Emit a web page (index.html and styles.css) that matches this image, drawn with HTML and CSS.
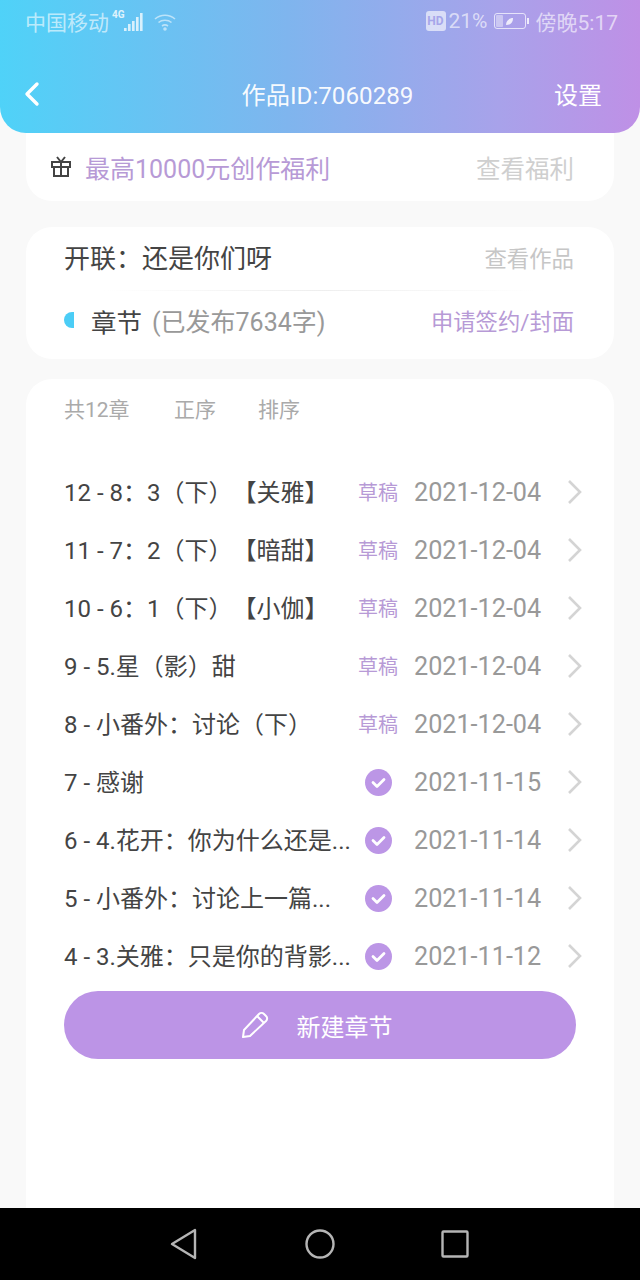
FILE: index.html
```html
<!DOCTYPE html>
<html lang="zh">
<head>
    <meta charset="UTF-8">
    <meta name="viewport" content="width=device-width, initial-scale=1.0">
    <title>作品设置</title>
    <link rel="stylesheet" href="styles.css">
</head>
<body>
    <div class="screen">
        <div class="header">
            <div class="status-bar">
                <div class="status-side">
                    <span>中国移动</span>
                    <svg class="signal" width="36" height="24" viewBox="0 0 36 24">
                        <text x="0" y="9" class="signal-type">4G</text>
                        <g fill="#fff" opacity="0.75">
                            <rect x="12" y="19" width="2.6" height="3"/>
                            <rect x="16" y="15" width="2.6" height="7"/>
                            <rect x="20" y="12" width="2.6" height="10"/>
                            <rect x="24" y="8" width="2.6" height="14"/>
                            <rect x="28" y="4" width="2.6" height="18"/>
                        </g>
                    </svg>
                    <svg class="wifi" width="24" height="20" viewBox="0 0 24 20" fill="none" stroke="#fff" stroke-width="1.6" opacity="0.55">
                        <path d="M2 8c5.5-5 14.5-5 20 0"/>
                        <path d="M5.5 11.5c3.5-3 9.500-3 13 0"/>
                        <path d="M9 15c1.800-1.300 4.200-1.300 6 0"/>
                        <circle cx="12" cy="18" r="1" fill="#fff"/>
                    </svg>
                </div>
                <div class="status-side">
                    <span class="hd">HD</span>
                    <span class="percent">21%</span>
                    <svg class="battery" width="36" height="18" viewBox="0 0 36 18">
                        <rect x="0.5" y="1.5" width="31" height="15" rx="2.5" fill="none" stroke="#fff" stroke-opacity="0.7"/>
                        <rect x="2" y="3" width="7" height="12" rx="1" fill="#fff" fill-opacity="0.4"/>
                        <path d="M12 13c0-5 4-7 7-7 0 4-2 7-7 7z" fill="#fff" fill-opacity="0.8"/>
                        <rect x="33" y="6" width="2" height="6" fill="#fff" fill-opacity="0.8"/>
                    </svg>
                    <span>傍晚5:17</span>
                </div>
            </div>
            <div class="nav-bar">
                <svg class="back" width="18" height="26" viewBox="0 0 18 26" fill="none" stroke="#fff" stroke-width="3.4" stroke-linecap="round" stroke-linejoin="round">
                    <path d="M14 3L4 13l10 10"/>
                </svg>
                <div class="nav-title">作品ID:7060289</div>
                <div class="nav-action">设置</div>
            </div>
        </div>

        <div class="card welfare">
            <svg class="gift" width="22" height="22" viewBox="0 0 22 22" fill="none" stroke="#444" stroke-width="2">
                <rect x="2" y="6" width="18" height="5"/>
                <path d="M4 11v9h14v-9M11 6v14M7 1l4 5 4-5"/>
            </svg>
            <span class="welfare-text">最高10000元创作福利</span>
            <span class="welfare-link">查看福利</span>
        </div>

        <div class="card work">
            <div class="work-row">
                <span class="work-name">开联：还是你们呀</span>
                <span class="work-link">查看作品</span>
            </div>
            <div class="divider"></div>
            <div class="chapter-row">
                <span class="half-dot"></span>
                <span class="chapter-label">章节</span>
                <span class="chapter-count">(已发布7634字)</span>
                <span class="chapter-link">申请签约/封面</span>
            </div>
        </div>

        <div class="card list-card">
            <div class="tabs">
                <span class="tab-total">共12章</span>
                <span class="tab-order">正序</span>
                <span>排序</span>
            </div>
            <div class="chapter-list">
                <div class="item">
                    <span class="item-title">12 - 8：3（下）【关雅】</span>
                    <span class="draft">草稿</span>
                    <span class="date">2021-12-04</span>
                    <svg class="arrow" width="16" height="26" viewBox="0 0 16 26"><path d="M2 2l11 11L2 24"/></svg>
                </div>
                <div class="item">
                    <span class="item-title">11 - 7：2（下）【暗甜】</span>
                    <span class="draft">草稿</span>
                    <span class="date">2021-12-04</span>
                    <svg class="arrow" width="16" height="26" viewBox="0 0 16 26"><path d="M2 2l11 11L2 24"/></svg>
                </div>
                <div class="item">
                    <span class="item-title">10 - 6：1（下）【小伽】</span>
                    <span class="draft">草稿</span>
                    <span class="date">2021-12-04</span>
                    <svg class="arrow" width="16" height="26" viewBox="0 0 16 26"><path d="M2 2l11 11L2 24"/></svg>
                </div>
                <div class="item">
                    <span class="item-title">9 - 5.星（影）甜</span>
                    <span class="draft">草稿</span>
                    <span class="date">2021-12-04</span>
                    <svg class="arrow" width="16" height="26" viewBox="0 0 16 26"><path d="M2 2l11 11L2 24"/></svg>
                </div>
                <div class="item">
                    <span class="item-title">8 - 小番外：讨论（下）</span>
                    <span class="draft">草稿</span>
                    <span class="date">2021-12-04</span>
                    <svg class="arrow" width="16" height="26" viewBox="0 0 16 26"><path d="M2 2l11 11L2 24"/></svg>
                </div>
                <div class="item">
                    <span class="item-title">7 - 感谢</span>
                    <svg class="check" width="27" height="27" viewBox="0 0 27 27"><circle cx="13.5" cy="13.5" r="13.5"/><path d="M8 13.5l4 4 7-7"/></svg>
                    <span class="date">2021-11-15</span>
                    <svg class="arrow" width="16" height="26" viewBox="0 0 16 26"><path d="M2 2l11 11L2 24"/></svg>
                </div>
                <div class="item">
                    <span class="item-title">6 - 4.花开：你为什么还是...</span>
                    <svg class="check" width="27" height="27" viewBox="0 0 27 27"><circle cx="13.5" cy="13.5" r="13.5"/><path d="M8 13.5l4 4 7-7"/></svg>
                    <span class="date">2021-11-14</span>
                    <svg class="arrow" width="16" height="26" viewBox="0 0 16 26"><path d="M2 2l11 11L2 24"/></svg>
                </div>
                <div class="item">
                    <span class="item-title">5 - 小番外：讨论上一篇...</span>
                    <svg class="check" width="27" height="27" viewBox="0 0 27 27"><circle cx="13.5" cy="13.5" r="13.5"/><path d="M8 13.5l4 4 7-7"/></svg>
                    <span class="date">2021-11-14</span>
                    <svg class="arrow" width="16" height="26" viewBox="0 0 16 26"><path d="M2 2l11 11L2 24"/></svg>
                </div>
                <div class="item">
                    <span class="item-title">4 - 3.关雅：只是你的背影...</span>
                    <svg class="check" width="27" height="27" viewBox="0 0 27 27"><circle cx="13.5" cy="13.5" r="13.5"/><path d="M8 13.5l4 4 7-7"/></svg>
                    <span class="date">2021-11-12</span>
                    <svg class="arrow" width="16" height="26" viewBox="0 0 16 26"><path d="M2 2l11 11L2 24"/></svg>
                </div>
            </div>
            <div class="new-chapter">
                <svg width="30" height="30" viewBox="0 0 30 30" fill="none" stroke="#fff" stroke-width="2" stroke-linejoin="round">
                    <path d="M3 27l1-7L19 4c1.5-1.5 3.5-1.5 5 0l2 2c1.5 1.5 1.5 3.5 0 5L10 26z"/>
                    <path d="M17 6l7 7"/>
                </svg>
                <span>新建章节</span>
            </div>
        </div>

        <div class="system-nav">
            <svg width="28" height="32" viewBox="0 0 28 32" fill="none" stroke="#b5b5b5" stroke-width="2.4" stroke-linejoin="round">
                <path d="M25 2v28L2 16z"/>
            </svg>
            <svg width="30" height="30" viewBox="0 0 30 30" fill="none" stroke="#b5b5b5" stroke-width="2.4">
                <circle cx="15" cy="15" r="13.5"/>
            </svg>
            <svg width="28" height="28" viewBox="0 0 28 28" fill="none" stroke="#b5b5b5" stroke-width="2.4" stroke-linejoin="round">
                <rect x="1.5" y="1.5" width="25" height="25" rx="1"/>
            </svg>
        </div>
    </div>
</body>
</html>
```

FILE: styles.css
```css
* {
    margin: 0;
    padding: 0;
    box-sizing: border-box;
}

body {
    font-family: Roboto, "Noto Sans CJK SC", sans-serif;
    background-color: #f9f9f9;
    text-spacing-trim: space-all;
}

.screen {
    width: 640px;
    height: 1280px;
    display: flex;
    flex-direction: column;
    overflow: hidden;
}

.header {
    height: 133px;
    flex-shrink: 0;
    border-radius: 0 0 26px 26px;
    background: linear-gradient(90deg, #4fd2f8 0%, #7fb5ee 45%, #a8a2ea 78%, #bf90e6 100%);
    color: #fff;
}

.status-bar {
    height: 44px;
    padding: 0 22px 2px 25px;
    display: flex;
    justify-content: space-between;
    align-items: center;
    font-size: 21px;
    color: rgba(255, 255, 255, 0.62);
}

.status-side {
    display: flex;
    align-items: center;
}

.signal {
    margin-left: 3px;
}

.signal-type {
    font-size: 10px;
    font-weight: 700;
    fill: #fff;
    opacity: 0.8;
}

.wifi {
    margin-left: 5px;
}

.hd {
    width: 20px;
    height: 20px;
    display: flex;
    align-items: center;
    justify-content: center;
    background: rgba(255, 255, 255, 0.62);
    color: #a6a6ea;
    font-size: 12px;
    font-weight: 700;
    border-radius: 3px;
}

.percent {
    margin-left: 3px;
}

.battery {
    margin: 0 6px;
}

.nav-bar {
    height: 89px;
    padding: 10px 38px 0 23px;
    display: flex;
    align-items: center;
    justify-content: space-between;
    font-size: 24px;
}

.nav-title {
    color: rgba(255, 255, 255, 0.95);
    margin-left: 60px;
    font-size: 24.2px;
}

.card {
    background: #fff;
    border-radius: 26px;
    margin: 0 26px;
}

.welfare {
    height: 68px;
    border-radius: 0 0 26px 26px;
    flex-shrink: 0;
    padding: 0 40px 0 24px;
    display: flex;
    align-items: center;
    font-size: 25px;
}

.welfare-text {
    color: #b79ad6;
    margin-left: 13px;
}

.welfare-link {
    margin-left: auto;
    font-size: 24.5px;
    color: #cfcfcf;
}

.work {
    margin-top: 26px;
    height: 132px;
    flex-shrink: 0;
    padding: 0 40px 0 38px;
}

.work-row {
    height: 63px;
    padding-bottom: 4px;
    display: flex;
    align-items: center;
    justify-content: space-between;
}

.work-name {
    font-family: Roboto, "Noto Sans CJK TC", sans-serif;
    font-size: 26px;
    color: #444;
}

.work-link {
    font-size: 22.4px;
    color: #c6c6c6;
}

.divider {
    height: 1px;
    margin: 0 40px;
    background: linear-gradient(90deg, #fff, #eeeeee 50%, #fff);
}

.chapter-row {
    height: 64px;
    padding-bottom: 6px;
    display: flex;
    align-items: center;
}

.half-dot {
    width: 10px;
    height: 16px;
    background: #4bcdf6;
    border-radius: 10px 0 0 10px;
}

.chapter-label {
    margin-left: 17px;
    font-size: 25.5px;
    color: #444;
}

.chapter-count {
    margin-left: 10px;
    font-size: 25px;
    color: #999;
}

.chapter-link {
    margin-left: auto;
    font-size: 22.3px;
    color: #b79ad6;
}

.list-card {
    margin-top: 20px;
    flex: 1;
    border-radius: 26px 26px 0 0;
    padding: 0 31px 0 38px;
}

.tabs {
    height: 58px;
    display: flex;
    align-items: center;
    font-size: 21px;
    color: #aaa;
    white-space: nowrap;
}

.tab-total {
    width: 65px;
}

.tab-order {
    margin: 0 42px 0 45px;
}

.chapter-list {
    margin-top: 26px;
}

.item {
    height: 58px;
    display: flex;
    align-items: center;
    font-size: 24px;
    color: #444;
}

.item-title {
    flex: 1;
    min-width: 0;
    padding-bottom: 4px;
    font-family: Roboto, "Noto Sans CJK TC", sans-serif;
    white-space: nowrap;
    overflow: hidden;
}

.draft {
    padding-bottom: 2px;
    font-size: 20px;
    color: #b79ad6;
    margin-right: 16px;
}

.check {
    margin-right: 22px;
    flex-shrink: 0;
}

.check circle {
    fill: #bc96e6;
}

.check path {
    fill: none;
    stroke: #fff;
    stroke-width: 2.8;
    stroke-linecap: round;
    stroke-linejoin: round;
}

.date {
    width: 127px;
    flex-shrink: 0;
    font-size: 25.2px;
    color: #999;
    white-space: nowrap;
}

.arrow {
    margin-left: 26px;
    flex-shrink: 0;
    fill: none;
    stroke: #d4d4d4;
    stroke-width: 2.6;
}

.new-chapter {
    height: 68px;
    margin: 6px 7px 0 0;
    padding-right: 8px;
    border-radius: 34px;
    background: #bc94e6;
    display: flex;
    align-items: center;
    justify-content: center;
    gap: 27px;
    font-size: 24px;
    color: #fff;
}

.system-nav {
    height: 72px;
    flex-shrink: 0;
    background: #000;
    display: flex;
    align-items: center;
    justify-content: space-between;
    padding: 0 171px 0 170px;
}
```
